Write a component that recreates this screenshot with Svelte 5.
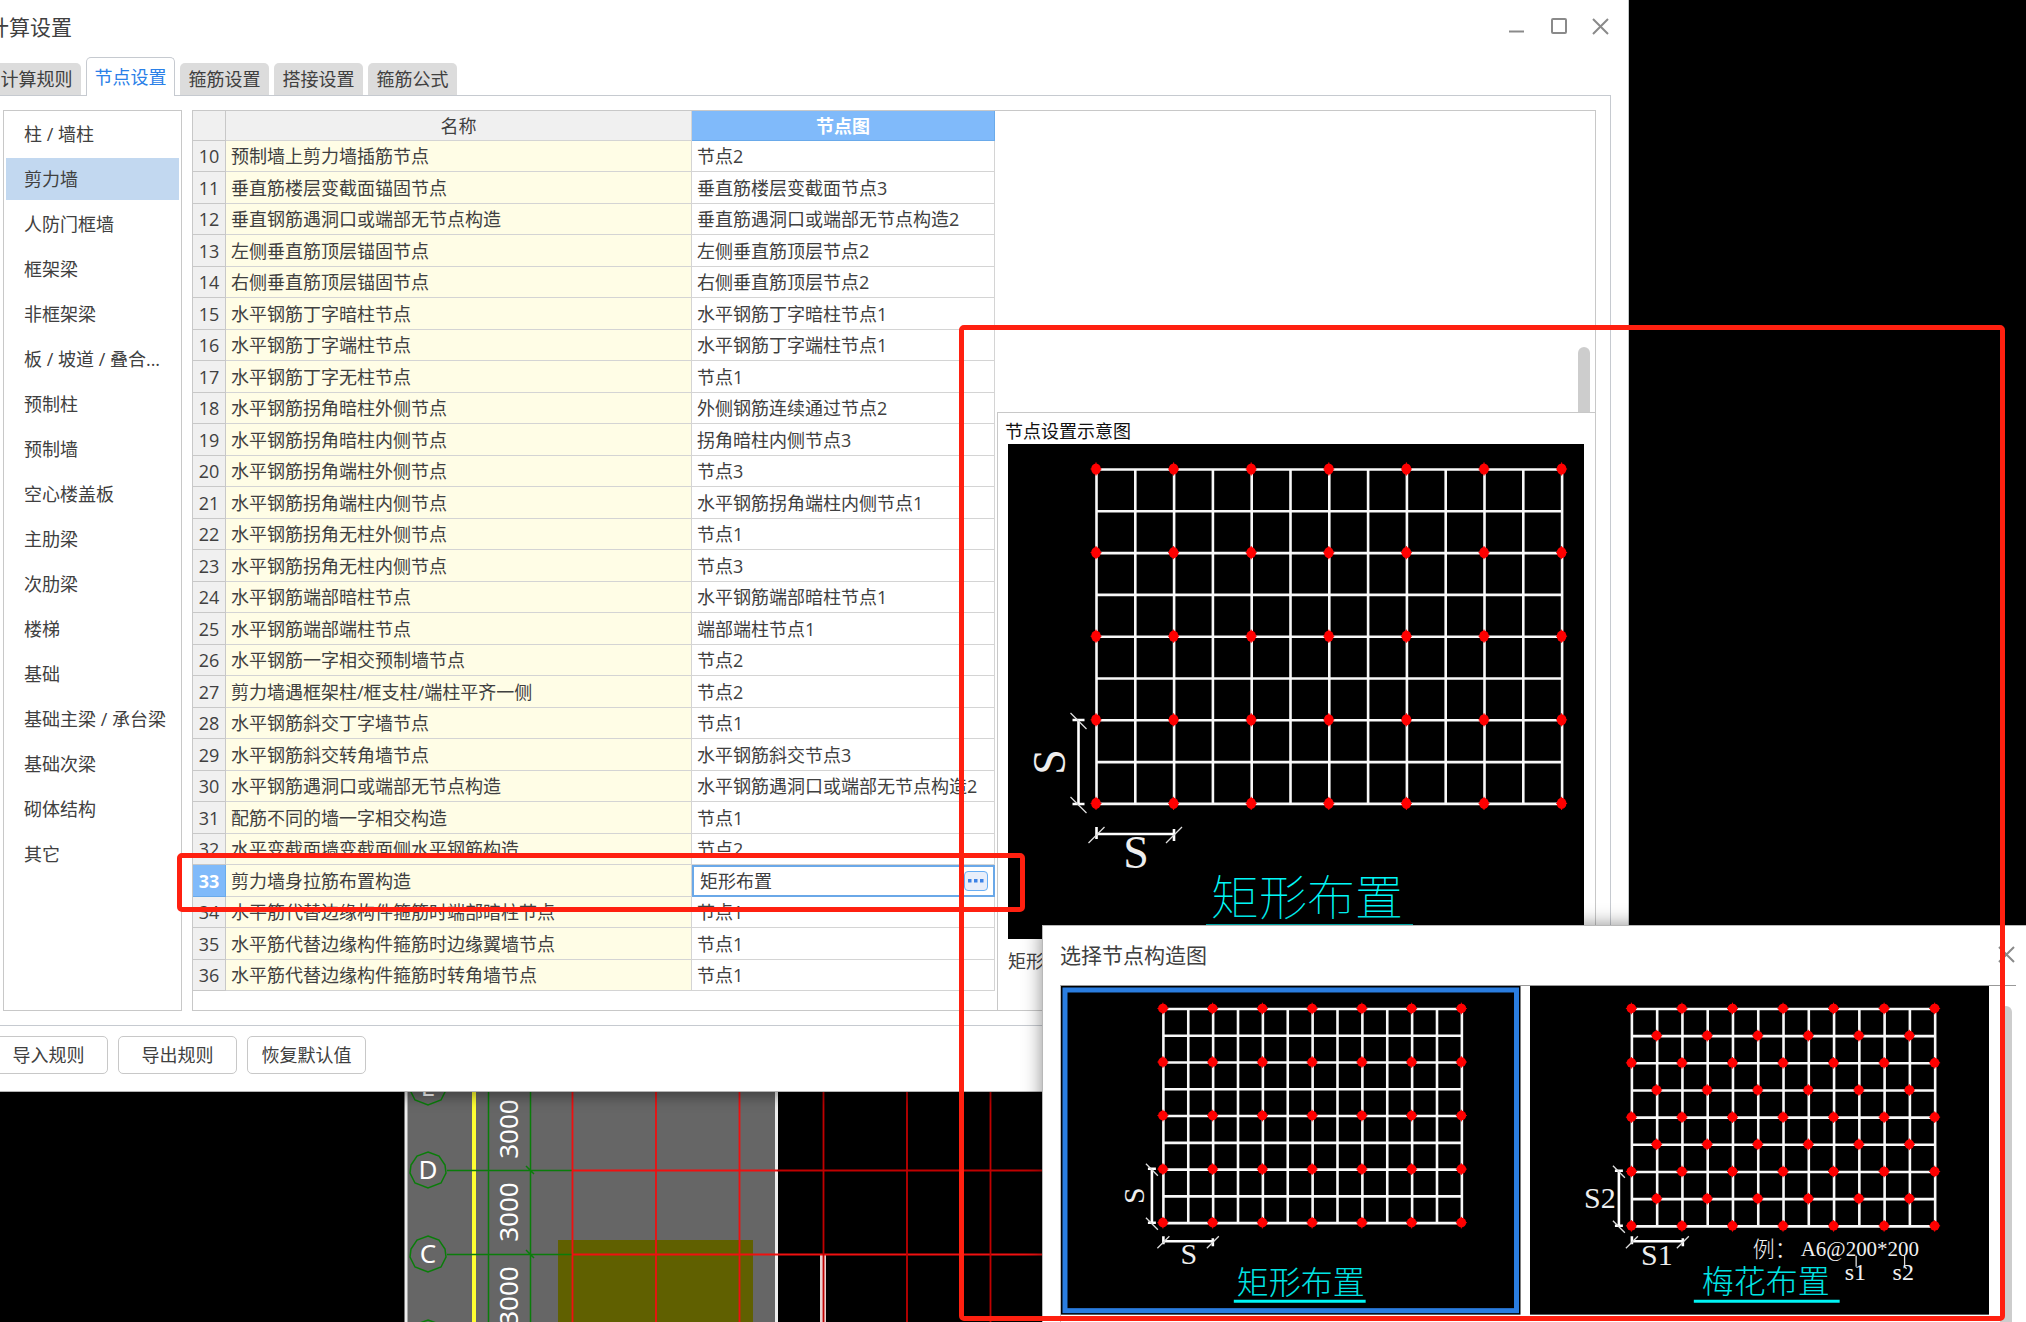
<script>
  const tabs = ['计算规则', '节点设置', '箍筋设置', '搭接设置', '箍筋公式'];
  const categories = [
    '柱 / 墙柱', '剪力墙', '人防门框墙', '框架梁', '非框架梁', '板 / 坡道 / 叠合...',
    '预制柱', '预制墙', '空心楼盖板', '主肋梁', '次肋梁', '楼梯', '基础',
    '基础主梁 / 承台梁', '基础次梁', '砌体结构', '其它'
  ];
  const rows = [
    [10, '预制墙上剪力墙插筋节点', '节点2'],
    [11, '垂直筋楼层变截面锚固节点', '垂直筋楼层变截面节点3'],
    [12, '垂直钢筋遇洞口或端部无节点构造', '垂直筋遇洞口或端部无节点构造2'],
    [13, '左侧垂直筋顶层锚固节点', '左侧垂直筋顶层节点2'],
    [14, '右侧垂直筋顶层锚固节点', '右侧垂直筋顶层节点2'],
    [15, '水平钢筋丁字暗柱节点', '水平钢筋丁字暗柱节点1'],
    [16, '水平钢筋丁字端柱节点', '水平钢筋丁字端柱节点1'],
    [17, '水平钢筋丁字无柱节点', '节点1'],
    [18, '水平钢筋拐角暗柱外侧节点', '外侧钢筋连续通过节点2'],
    [19, '水平钢筋拐角暗柱内侧节点', '拐角暗柱内侧节点3'],
    [20, '水平钢筋拐角端柱外侧节点', '节点3'],
    [21, '水平钢筋拐角端柱内侧节点', '水平钢筋拐角端柱内侧节点1'],
    [22, '水平钢筋拐角无柱外侧节点', '节点1'],
    [23, '水平钢筋拐角无柱内侧节点', '节点3'],
    [24, '水平钢筋端部暗柱节点', '水平钢筋端部暗柱节点1'],
    [25, '水平钢筋端部端柱节点', '端部端柱节点1'],
    [26, '水平钢筋一字相交预制墙节点', '节点2'],
    [27, '剪力墙遇框架柱/框支柱/端柱平齐一侧', '节点2'],
    [28, '水平钢筋斜交丁字墙节点', '节点1'],
    [29, '水平钢筋斜交转角墙节点', '水平钢筋斜交节点3'],
    [30, '水平钢筋遇洞口或端部无节点构造', '水平钢筋遇洞口或端部无节点构造2'],
    [31, '配筋不同的墙一字相交构造', '节点1'],
    [32, '水平变截面墙变截面侧水平钢筋构造', '节点2'],
    [33, '剪力墙身拉筋布置构造', '矩形布置'],
    [34, '水平筋代替边缘构件箍筋时端部暗柱节点', '节点1'],
    [35, '水平筋代替边缘构件箍筋时边缘翼墙节点', '节点1'],
    [36, '水平筋代替边缘构件箍筋时转角墙节点', '节点1']
  ];
  const cols = Array.from({ length: 13 }, (_, i) => i);
  const lines = Array.from({ length: 9 }, (_, i) => i);
  const hasTie = (c, r, staggered) =>
    (c % 2 === 0 && r % 2 === 0) || (staggered && c % 2 === 1 && r % 2 === 1);
  const axes = [
    { name: 'E', y: -4 },
    { name: 'D', y: 79 },
    { name: 'C', y: 163 },
    { name: 'B', y: 247 }
  ];
</script>

{#snippet mesh(x, y, dx, dy, staggered, ry)}
  <g class="mesh">
    {#each cols as c}
      <line x1={x + c * dx} y1={y} x2={x + c * dx} y2={y + 8 * dy} />
    {/each}
    {#each lines as r}
      <line x1={x} y1={y + r * dy} x2={x + 12 * dx} y2={y + r * dy} />
    {/each}
  </g>
  <g class="ties">
    {#each lines as r}
      {#each cols as c}
        {#if hasTie(c, r, staggered)}
          <ellipse cx={x + c * dx - 0.5} cy={y + r * dy - 0.5} rx="4.8" ry={ry} />
          <path d="M{x + c * dx - 6} {y + r * dy - 0.5}h11M{x + c * dx - 0.5} {y + r * dy - ry - 1.5}v{2 * ry + 2}" />
        {/if}
      {/each}
    {/each}
  </g>
{/snippet}

{#snippet dims(vx, y1, y2, hy, x1, x2, k)}
  <path class="dim" d="M{vx} {y1}V{y2}M{vx - k} {y1}h{2 * k}M{vx - k} {y2}h{2 * k}M{x1} {hy}H{x2}M{x1} {hy - k - 1}v{2 * k}M{x2} {hy - k + 1}v{2 * k}" />
  <path class="tick" d="M{vx - k - 2} {y1 - k - 1}l{2 * k + 4} {2 * k + 4}M{vx - k - 2} {y2 - k - 1}l{2 * k + 4} {2 * k + 4}M{x1 - k - 2} {hy + k + 3}l{2 * k + 4} {-2 * k - 4}M{x2 - k - 2} {hy + k + 3}l{2 * k + 4} {-2 * k - 4}" />
{/snippet}

<div class="workspace">
  <svg class="cad" width="1060" height="240" viewBox="0 0 1060 240" role="img" aria-label="轴网">
    <rect x="405" y="0" width="372" height="240" fill="#666" />
    <rect x="558" y="149" width="195" height="91" fill="#606000" />
    <path d="M406 0V240M776.500 0V240" stroke="#eee" stroke-width="3" />
    <path d="M474 0V240" stroke="#ffff32" stroke-width="4" />
    <path d="M823 164V240" stroke="#e8d0d0" stroke-width="6" />
    <path d="M488.500 0V240M530.500 0V240M447 79.500H572M447 163.500H572M526 75l8 8M526 159l8 8" stroke="#0a7d0a" stroke-width="1.500" />
    <path d="M572.500 0V240M656 0V240M739.500 0V240M572 79.500H777M572 163.500H1060" stroke="#f01010" stroke-width="1.800" />
    <path d="M823.500 0V240M907 0V240M990.500 0V240M777 79.500H1060" stroke="#c00000" stroke-width="1.800" />
    {#each axes as axis}
      <g transform="translate(428 {axis.y})">
        <polygon points="0,-18 11,-14 17,-5 18,3 13,13 0,18 -13,13 -18,3 -17,-5 -11,-14" fill="none" stroke="#0a7d0a" stroke-width="1.500" />
        <text class="axis" x="0" y="9">{axis.name}</text>
      </g>
    {/each}
    {#each [38, 121, 205] as y}
      <text class="axis" transform="translate(518 {y}) rotate(-90)">3000</text>
    {/each}
  </svg>

  <main class="window">
    <header class="titlebar">
      <h1>计算设置</h1>
      <div class="controls">
        <button aria-label="最小化"><svg width="18" height="18" viewBox="0 0 18 18"><path d="M1 13.500h15" /></svg></button>
        <button aria-label="最大化"><svg width="18" height="18" viewBox="0 0 18 18"><rect x="2" y="1" width="14" height="14" rx="1" /></svg></button>
        <button aria-label="关闭"><svg width="18" height="18" viewBox="0 0 18 18"><path d="M1 1l15 15M16 1L1 16" /></svg></button>
      </div>
    </header>

    <nav class="tabs">
      {#each tabs as tab, i}
        <button class:active={i === 1}>{tab}</button>
      {/each}
    </nav>

    <section class="panel">
      <ul class="categories">
        {#each categories as name, i}
          <li><button class:selected={i === 1}>{name}</button></li>
        {/each}
      </ul>

      <div class="content">
        <table>
          <thead>
            <tr><th class="num"></th><th>名称</th><th class="node">节点图</th></tr>
          </thead>
          <tbody>
            {#each rows as [num, name, node]}
              <tr class:current={num === 33}>
                <td class="num">{num}</td>
                <td class="name">{name}</td>
                <td class="value">
                  {#if num === 33}
                    <div class="editor">
                      <input type="text" value={node} aria-label={name} />
                      <button aria-label="选择节点图">
                        <svg width="16" height="4" viewBox="0 0 16 4"><path d="M0 0h3.500v3.500h-3.500zM6 0h3.500v3.500h-3.500zM12 0h3.500v3.500h-3.500z" fill="#3c82e6" /></svg>
                      </button>
                    </div>
                  {:else}
                    {node}
                  {/if}
                </td>
              </tr>
            {/each}
          </tbody>
        </table>

        <div class="side">
          <div class="blank"><span class="thumb"></span></div>
          <figure class="preview">
            <h2>节点设置示意图</h2>
            <svg viewBox="0 0 576 495" role="img" aria-label="矩形布置示意图">
              <rect width="576" height="495" />
              {@render mesh(88.5, 25.5, 38.8, 41.8, false, 5.6)}
              {@render dims(70.5, 276, 360, 390, 88.5, 166, 6)}
              <text class="letter big" transform="translate(57 318) rotate(-90)">S</text>
              <text class="letter big" x="128" y="424">S</text>
              <text class="caption big-caption" x="299" y="471">矩形布置</text>
              <path class="underline" d="M198 481H405" />
            </svg>
            <figcaption>矩形布置</figcaption>
          </figure>
        </div>
      </div>
    </section>

    <footer>
      <button>导入规则</button>
      <button>导出规则</button>
      <button>恢复默认值</button>
    </footer>
  </main>

  <section class="dialog" role="dialog" aria-label="选择节点构造图">
    <header>
      <h2>选择节点构造图</h2>
      <button aria-label="关闭"><svg width="18" height="18" viewBox="0 0 18 18"><path d="M1 1l15 15M16 1L1 16" /></svg></button>
    </header>
    <div class="choices">
      <button class="card chosen" aria-label="矩形布置">
        <svg viewBox="0 0 460 329">
          <rect width="460" height="329" />
          <rect class="frame" x="4" y="4" width="452" height="321" />
          {@render mesh(102.5, 23, 24.9, 26.8, false, 4.8)}
          {@render dims(91, 183, 237, 255.5, 102.5, 152, 4)}
          <text class="letter" transform="translate(83 210) rotate(-90)">S</text>
          <text class="letter" x="128" y="278">S</text>
          <text class="caption" x="240" y="308">矩形布置</text>
          <path class="underline bright" d="M173 315.500H305" />
        </svg>
      </button>
      <button class="card" aria-label="梅花布置">
        <svg viewBox="0 0 460 329">
          <rect width="460" height="329" />
          {@render mesh(102, 23, 25.3, 27.2, true, 4.8)}
          {@render dims(89, 185, 240, 255.5, 102, 153, 4)}
          <text class="letter" x="70" y="222">S2</text>
          <text class="letter" x="127" y="279">S1</text>
          <text class="note cjk" x="223" y="271">例：</text>
          <text class="note code" x="271" y="270">A6@200*200</text>
          <path class="tick" d="M326.500 270v11M375 270v11l2 2" />
          <text class="note" x="315" y="294">s1</text>
          <text class="note" x="363" y="294">s2</text>
          <text class="caption" x="236" y="307">梅花布置</text>
          <path class="underline bright" d="M164 315.500H310" />
        </svg>
      </button>
      <span class="thumb"></span>
    </div>
  </section>

  <div class="mark mark-row"></div>
  <div class="mark mark-area"></div>
</div>

<style>
  :global(body) {
    background: #000;
  }
  .workspace {
    position: relative;
    min-height: 100vh;
    overflow: hidden;
    color: #404040;
    font: 18px/24px 'Open Sans', 'Noto Sans CJK SC', sans-serif;
  }
  button,
  input {
    font: inherit;
    color: inherit;
    padding: 0;
    border: 0;
    background: none;
  }
  h1,
  h2,
  ul,
  figure {
    margin: 0;
    padding: 0;
    font-weight: 400;
  }
  .cad {
    position: absolute;
    left: 0;
    top: 1091px;
  }
  .axis {
    fill: #fff;
    font: 26px 'Noto Sans', sans-serif;
    text-anchor: middle;
  }
  .window {
    position: relative;
    box-sizing: border-box;
    margin: 0 397px 0 -21px;
    background: #fff;
    border-right: 1px solid #c4c8c8;
    border-bottom: 1px solid #b4b4b4;
    box-shadow: 0 4px 14px rgba(0, 0, 0, 0.4);
  }
  .titlebar {
    display: flex;
    align-items: center;
    justify-content: space-between;
    height: 53px;
    padding: 0 6px 0 9px;
  }
  h1,
  .dialog h2 {
    font-size: 21px;
    line-height: 28px;
  }
  .controls {
    display: flex;
  }
  .controls button {
    width: 42px;
    height: 36px;
  }
  .controls svg,
  .dialog header svg {
    display: block;
    margin: 0 auto;
    fill: none;
    stroke: #8a8a8a;
    stroke-width: 2;
  }
  .tabs {
    display: flex;
    align-items: flex-end;
    gap: 5px;
    height: 43px;
    padding-left: 13px;
    margin-bottom: -1px;
    position: relative;
  }
  .tabs button {
    width: 89px;
    height: 32px;
    margin-bottom: 1px;
    background: #dcdcdc;
    border-radius: 5px 5px 0 0;
  }
  .tabs .active {
    box-sizing: border-box;
    height: 39px;
    margin-bottom: 0;
    color: #2a80e8;
    background: #fff;
    border: 1px solid #c6cad0;
    border-bottom: 0;
  }
  .panel {
    display: flex;
    gap: 10px;
    margin-right: 17px;
    padding: 14px 14px 14px 24px;
    border: 1px solid #c6cad0;
    border-left: 0;
  }
  .categories {
    box-sizing: border-box;
    width: 179px;
    flex: none;
    padding: 2px;
    border: 1px solid #c8c8c8;
    list-style: none;
  }
  .categories li {
    height: 45px;
  }
  .categories button {
    display: block;
    width: 100%;
    height: 42px;
    padding-left: 18px;
    text-align: left;
    white-space: nowrap;
  }
  .categories .selected {
    background: #c2d8f0;
  }
  .content {
    flex: 1;
    display: flex;
    align-items: stretch;
    gap: 2px;
    min-width: 0;
    border: 1px solid #c8c8c8;
  }
  table {
    width: 802px;
    flex: none;
    align-self: flex-start;
    table-layout: fixed;
    border-collapse: separate;
    border-spacing: 0;
    margin-bottom: 19px;
  }
  th,
  td {
    box-sizing: border-box;
    height: 31px;
    padding: 0 0 0 5px;
    border-right: 1px solid #d4d4d4;
    border-bottom: 1px solid #d4d4d4;
    white-space: nowrap;
    font-weight: 400;
    text-align: left;
  }
  tbody tr:nth-child(even) td {
    height: 32px;
  }
  th {
    height: 30px;
    padding: 0;
    text-align: center;
    background: #f0f0f0;
  }
  .num {
    width: 33px;
    padding: 0;
    text-align: center;
    background: #f0f0f0;
    border-color: #c8c8c8;
  }
  th.node {
    width: 303px;
    color: #fff;
    font-weight: 700;
    background: #80bafa;
    border-color: #6aaaea;
  }
  .name {
    background: #fffde6;
  }
  .current .num {
    color: #fff;
    font-weight: 700;
    background: #80bafa;
    border-color: #6aaaea;
  }
  .current .value {
    padding: 0;
    border: 0;
  }
  .editor {
    box-sizing: border-box;
    display: flex;
    align-items: center;
    height: 32px;
    padding: 0 5px 0 6px;
    border: 2px solid #6aa8e8;
  }
  .editor input {
    flex: 1;
    min-width: 0;
    outline: 0;
  }
  .editor button {
    display: grid;
    place-items: center;
    box-sizing: border-box;
    width: 24px;
    height: 20px;
    background: #e8eefa;
    border: 1px solid #68aef4;
    border-radius: 4px;
  }
  .side {
    flex: 1;
    min-width: 0;
    display: flex;
    flex-direction: column;
  }
  .blank {
    flex: 1;
    display: flex;
    justify-content: flex-end;
    align-items: flex-end;
    padding-right: 5px;
  }
  .thumb {
    width: 12px;
    height: 65px;
    background: #cdcdcd;
    border-radius: 6px 6px 0 0;
  }
  .preview {
    padding: 6px 11px 37px 10px;
    border-top: 1px solid #c8c8c8;
    border-left: 1px solid #c8c8c8;
  }
  .preview h2 {
    margin-left: -3px;
    color: #111;
    font-size: 18px;
    line-height: 25px;
  }
  .preview svg,
  .card svg {
    display: block;
    width: 100%;
  }
  figcaption {
    margin-top: 10px;
    line-height: 24px;
  }
  footer {
    display: flex;
    gap: 10px;
    padding: 10px 10px 17px;
  }
  footer button {
    box-sizing: border-box;
    width: 119px;
    height: 38px;
    border: 1px solid #c8c8c8;
    border-radius: 5px;
  }
  .mesh line {
    stroke: #f8f8f8;
    stroke-width: 2.6;
  }
  .ties ellipse {
    fill: #f00;
  }
  .ties path {
    stroke: #f00;
    stroke-width: 1;
  }
  .dim {
    fill: none;
    stroke: #fff;
    stroke-width: 2.6;
  }
  .tick {
    fill: none;
    stroke: #ddd;
    stroke-width: 1.3;
  }
  .letter {
    fill: #eee;
    font: 30px 'Liberation Serif', serif;
    text-anchor: middle;
  }
  .big {
    font-size: 46px;
  }
  .note {
    fill: #f0f0f0;
    font: 24px 'Liberation Serif', serif;
  }
  .cjk {
    font: 300 22px 'Noto Sans CJK SC', sans-serif;
  }
  .code {
    font-size: 21px;
  }
  .caption {
    fill: #00f8f8;
    font: 100 32px 'Noto Sans CJK SC', sans-serif;
    text-anchor: middle;
  }
  .card .caption {
    font-weight: 300;
    fill: #00e4e4;
  }
  .big-caption {
    font-size: 48px;
  }
  .underline {
    stroke: #00d0d0;
    stroke-width: 2;
  }
  .bright {
    stroke: #00f4f4;
    stroke-width: 3;
  }
  .frame {
    fill: none;
    stroke: #2a7de0;
    stroke-width: 5;
  }
  .dialog {
    position: absolute;
    box-sizing: border-box;
    top: 925px;
    right: 0;
    bottom: 0;
    width: 984px;
    padding: 0 10px 0 17px;
    background: #fff;
    border-top: 1px solid #b8b8b8;
    border-left: 1px solid #b8b8b8;
    box-shadow: 0 0 18px rgba(0, 0, 0, 0.45);
  }
  .dialog header {
    display: flex;
    align-items: center;
    justify-content: space-between;
    box-sizing: border-box;
    height: 59px;
    padding-bottom: 2px;
  }
  .dialog header button {
    width: 18px;
  }
  .choices {
    box-sizing: border-box;
    display: flex;
    align-items: flex-start;
    gap: 9px;
    height: 337px;
    border-top: 1px solid #999;
    border-left: 1px solid #c0c0c0;
  }
  .card {
    flex: 1;
  }
  .choices .thumb {
    height: 316px;
    margin: 20px 4px 0 2px;
  }
  .mark {
    position: absolute;
    box-sizing: border-box;
    border: 5px solid #ff2010;
    border-radius: 5px;
    pointer-events: none;
  }
  .mark-row {
    left: 177px;
    top: 853px;
    width: 848px;
    height: 59px;
  }
  .mark-area {
    left: 959px;
    top: 325px;
    width: 1046px;
    height: 996px;
  }
</style>
